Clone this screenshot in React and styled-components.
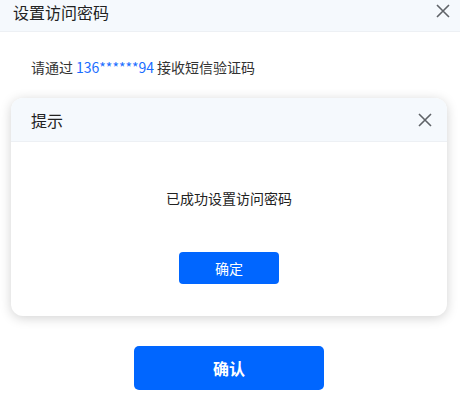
import styled, { createGlobalStyle } from "styled-components";

const GlobalStyle = createGlobalStyle`
  html, body {
    margin: 0;
    padding: 0;
    background: #fff;
  }
  body {
    font-family: "Noto Sans CJK SC", "Noto Sans", sans-serif;
    color: #333;
  }
`;

const Panel = styled.div`
  width: 460px;
  display: flex;
  flex-direction: column;
`;

const Header = styled.div`
  height: ${({ $h }) => $h}px;
  display: flex;
  justify-content: space-between;
  align-items: ${({ $align }) => $align || "center"};
  padding: ${({ $pad }) => $pad};
  background: #f5f9fd;
  border-bottom: 1px solid #edf0f4;
  box-sizing: content-box;
`;

const Title = styled.span`
  font-size: 16px;
  line-height: 24px;
  color: #222;
`;

const CloseBtn = styled.button`
  border: 0;
  padding: 0;
  margin: ${({ $mt }) => $mt || 0}px 0 0;
  background: none;
  width: 16px;
  height: 16px;
  display: flex;
  align-items: center;
  justify-content: center;
  cursor: pointer;
`;

const Hint = styled.p`
  margin: 25px 0 0 31px;
  font-size: 14px;
  line-height: 20px;
  color: #333;
`;

const Phone = styled.span`
  color: #1a6dff;
  margin: 0 3px;
`;

const Dialog = styled.div`
  margin: 21px 13px 0 11px;
  border-radius: 12px;
  overflow: hidden;
  background: #fff;
  box-shadow: 0 2px 12px rgba(0, 0, 0, 0.18);
`;

const DialogBody = styled.div`
  display: flex;
  flex-direction: column;
  align-items: center;
  padding: 46px 0 32px;
`;

const Message = styled.div`
  font-size: 14px;
  line-height: 20px;
  color: #222;
`;

const Button = styled.button`
  border: 0;
  background: #0066ff;
  color: #fff;
  font-family: inherit;
  width: ${({ $w }) => $w}px;
  height: ${({ $h }) => $h}px;
  border-radius: ${({ $r }) => $r}px;
  font-size: ${({ $fs }) => $fs}px;
  font-weight: ${({ $bold }) => ($bold ? 700 : 400)};
  margin-top: ${({ $mt }) => $mt}px;
  padding: 0;
  cursor: pointer;
`;

const Footer = styled.div`
  display: flex;
  justify-content: center;
  padding-right: 2px;
`;

function CloseIcon() {
  return (
    <svg width="14" height="14" viewBox="0 0 14 14">
      <path d="M1 1L13 13M13 1L1 13" stroke="#5f6368" strokeWidth="1.6" fill="none" />
    </svg>
  );
}

export default function App() {
  return (
    <>
      <GlobalStyle />
      <Panel>
        <Header $h={31} $align="flex-start" $pad="0 9px 0 13px">
          <Title>设置访问密码</Title>
          <CloseBtn $mt={3}>
            <CloseIcon />
          </CloseBtn>
        </Header>
        <Hint>
          请通过<Phone>136******94</Phone>接收短信验证码
        </Hint>
        <Dialog>
          <Header $h={43} $pad="0 14px 0 20px">
            <Title>提示</Title>
            <CloseBtn>
              <CloseIcon />
            </CloseBtn>
          </Header>
          <DialogBody>
            <Message>已成功设置访问密码</Message>
            <Button $w={100} $h={32} $r={4} $fs={14} $mt={44}>
              确定
            </Button>
          </DialogBody>
        </Dialog>
        <Footer>
          <Button $w={190} $h={44} $r={5} $fs={16} $mt={30} $bold>
            确认
          </Button>
        </Footer>
      </Panel>
    </>
  );
}
